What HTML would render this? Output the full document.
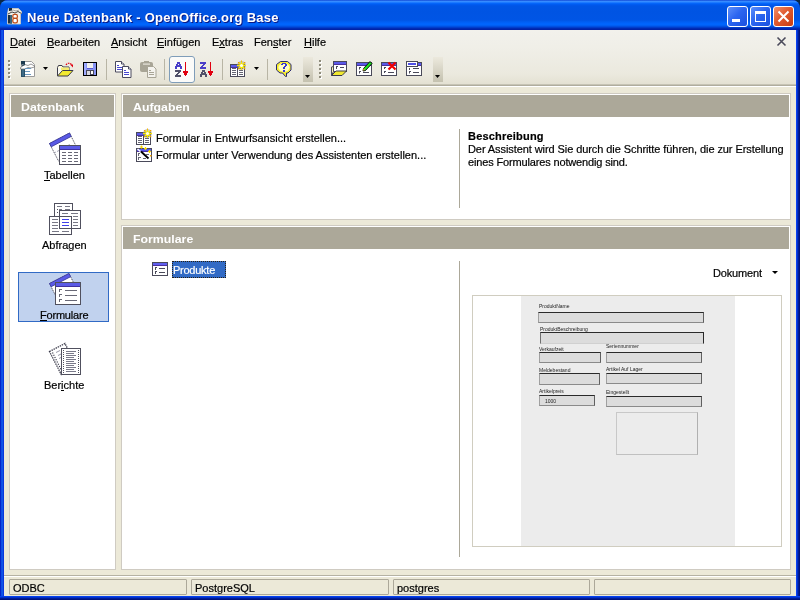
<!DOCTYPE html>
<html><head><meta charset="utf-8">
<style>
*{margin:0;padding:0;box-sizing:border-box}
html,body{width:800px;height:600px;overflow:hidden;background:#0a2848}
body{position:relative;font-family:"Liberation Sans",sans-serif;font-size:11px;color:#000;line-height:1;-webkit-font-smoothing:antialiased}
.t,.menu,.status span,.hdr span,#ttext,.lbl{will-change:transform}
.t,.menu,.status span{-webkit-text-stroke:0.2px currentColor}
.a{position:absolute}
svg{position:absolute;overflow:visible}
#win{position:absolute;left:0;top:0;width:800px;height:600px;border-radius:8px 8px 0 0;overflow:hidden;
 background:linear-gradient(90deg,#0019b8 0,#0831d9 1px,#166aee 2px,#0a3ee0 3px,#0831d9 4px,#0a40f0 796px,#0a40f0 797px,#0030c8 797px,#0030c8 798px,#001c98 798px,#001c98 799px,#00127a 799px)}
#title{position:absolute;left:0;top:0;width:800px;height:30px;
 background:linear-gradient(#0030c8 0px,#3d8fff 1px,#2f88ff 2px,#0a6cff 3px,#005ff4 4px,#0058ee 5px,#0055e6 6px,#0054e3 12px,#0055e5 20px,#005ff4 22px,#0066ff 24px,#0064fa 25px,#0058ec 26px,#0046d6 27px,#0034c0 28px,#0022a8 29px,#0022a8 30px)}
#ttext{position:absolute;left:27px;top:11px;color:#fff;font-weight:bold;font-size:13px;letter-spacing:0.25px;text-shadow:1px 1px #0a1883;white-space:nowrap}
#client{position:absolute;left:4px;top:30px;width:792px;height:566px;background:#ece9d8}
#bottomb{position:absolute;left:0;top:596px;width:800px;height:4px;background:linear-gradient(#0440f0 0,#0440f0 1px,#0030c8 1px,#0030c8 2px,#001c98 2px,#001c98 3px,#00127a 3px)}
#dock{position:absolute;left:4px;top:30px;width:792px;height:55px;background:linear-gradient(#f2f1ec 0,#f0efe8 30%,#ebe9de 80%,#e3e0d1 100%)}
.menu{position:absolute;top:37px;font-size:11px;white-space:nowrap}
.menu u{text-decoration:none;border-bottom:1px solid #000;display:inline-block;line-height:9px;padding-bottom:0px}
.panel{position:absolute;border:1px solid #cfcbc2;background:#fff}
.hdr{position:absolute;left:1px;top:1px;right:1px;height:22px;background:#aca899;color:#fff;font-weight:bold;font-size:11px;white-space:nowrap}
.hdr span{position:absolute;left:10px;top:7px;letter-spacing:0px;transform:scaleX(1.12);transform-origin:0 0}
.status{position:absolute;top:579px;height:16px;border:1px solid #aca899;border-radius:1px;font-size:11px;white-space:nowrap}
.status span{position:absolute;left:3px;top:3px}
.t{position:absolute;white-space:nowrap;font-size:11px}
.sep{position:absolute;top:59px;width:1px;height:21px;background:#b8b5a5}
.grip{position:absolute;width:3px;top:60px;height:19px;background:repeating-linear-gradient(#c1bfb0 0 1px,#fff 1px 2px,transparent 2px 4px)}
.chev{position:absolute;top:57px;width:10px;height:25px;background:linear-gradient(#ece9dd,#c4c1af)}
.fl{position:absolute;background:#dcdcdc;border:1px solid;border-color:#2a2a2a #606060 #8a8a8a #a0a0a0}
.lbl{position:absolute;font-size:5px;color:#222;white-space:nowrap;line-height:5px}
</style></head><body>
<div id="win">
 <div id="title"><div id="ttext">Neue Datenbank - OpenOffice.org Base</div></div>
 <div id="client"></div>
 <div id="bottomb"></div>
</div>
<div id="dock"></div>
<!-- title icon -->
<svg style="left:5px;top:6px" width="20" height="20" viewBox="0 0 20 20">
 <path d="M2.5 7.5l1-5h10l3 3v2l-1 1v9.5h-13z" fill="#f2f0ea" stroke="#d0ccc0" stroke-width="0.8"/>
 <rect x="4" y="2" width="3" height="3" fill="#1a2a38"/>
 <path d="M3 8l4-2 3 1 3-1.5 3.5 2" stroke="#404040" fill="none" stroke-width="1"/>
 <path d="M5 5l3-1 3 1 3-1" stroke="#909090" fill="none" stroke-width="0.8"/>
 <rect x="3" y="9" width="4" height="8.5" fill="#1c3040"/>
 <rect x="5" y="9" width="2" height="8.5" fill="#3a6478"/>
 <rect x="7.8" y="8.3" width="4.6" height="4" rx="1.6" fill="#fff" stroke="#c04c18" stroke-width="1.3"/>
 <rect x="7.8" y="12.3" width="4.6" height="4.5" rx="1.6" fill="#fff" stroke="#c04c18" stroke-width="1.3"/>
</svg>
<!-- window buttons -->
<div class="a" style="left:727px;top:6px;width:21px;height:21px;border:1px solid #fff;border-radius:3px;background:linear-gradient(135deg,#5d8ffa 0%,#2c66f0 45%,#1a50e0 100%)"></div>
<div class="a" style="left:732px;top:19px;width:8px;height:3px;background:#fff"></div>
<div class="a" style="left:750px;top:6px;width:21px;height:21px;border:1px solid #fff;border-radius:3px;background:linear-gradient(135deg,#5d8ffa 0%,#2c66f0 45%,#1a50e0 100%)"></div>
<div class="a" style="left:755px;top:11px;width:11px;height:11px;border:1px solid #fff;border-top-width:3px"></div>
<div class="a" style="left:773px;top:6px;width:21px;height:21px;border:1px solid #fff;border-radius:3px;background:linear-gradient(135deg,#f0906a 0%,#e05a30 45%,#c83c10 100%)"></div>
<svg style="left:773px;top:6px" width="21" height="21"><path d="M5.5 5.5l10 10M15.5 5.5l-10 10" stroke="#fff" stroke-width="2"/></svg>

<!-- menu -->
<div class="menu" style="left:10px"><u>D</u>atei</div>
<div class="menu" style="left:47px"><u>B</u>earbeiten</div>
<div class="menu" style="left:111px"><u>A</u>nsicht</div>
<div class="menu" style="left:157px"><u>E</u>infügen</div>
<div class="menu" style="left:212px">E<u>x</u>tras</div>
<div class="menu" style="left:254px">Fen<u>s</u>ter</div>
<div class="menu" style="left:304px"><u>H</u>ilfe</div>
<svg style="left:776px;top:36px" width="11" height="11"><path d="M1.5 1.5l8 8M9.5 1.5l-8 8" stroke="#4a4a5a" stroke-width="1.6"/></svg>

<!-- toolbar separator line -->
<div class="a" style="left:4px;top:84px;width:792px;height:1px;background:#c6c3b4"></div>
<div class="a" style="left:4px;top:85px;width:792px;height:1px;background:#b0ad9e"></div>
<div class="a" style="left:4px;top:86px;width:792px;height:1px;background:#fff"></div>

<!-- toolbar -->
<svg style="left:8px;top:59px" width="4" height="20" viewBox="0 0 4 20"><rect x="0" y="1" width="2" height="2" fill="#8e8c7c"/><rect x="2" y="2" width="1" height="2" fill="#fff"/><rect x="1" y="3" width="2" height="1" fill="#fff"/><rect x="0" y="5" width="2" height="2" fill="#8e8c7c"/><rect x="2" y="6" width="1" height="2" fill="#fff"/><rect x="1" y="7" width="2" height="1" fill="#fff"/><rect x="0" y="9" width="2" height="2" fill="#8e8c7c"/><rect x="2" y="10" width="1" height="2" fill="#fff"/><rect x="1" y="11" width="2" height="1" fill="#fff"/><rect x="0" y="13" width="2" height="2" fill="#8e8c7c"/><rect x="2" y="14" width="1" height="2" fill="#fff"/><rect x="1" y="15" width="2" height="1" fill="#fff"/><rect x="0" y="17" width="2" height="2" fill="#8e8c7c"/><rect x="2" y="18" width="1" height="2" fill="#fff"/><rect x="1" y="19" width="2" height="1" fill="#fff"/></svg>
<svg style="left:17px;top:58px" width="20" height="20" viewBox="0 0 20 20">
 <path d="M4.5 3.5h10l3 3v12h-13z" fill="#fff" stroke="#9a9a9a"/>
 <rect x="4" y="3" width="4" height="3.5" fill="#1e3c50"/>
 <rect x="4" y="10" width="4" height="9" fill="#2a5068"/>
 <rect x="5" y="11" width="2" height="7" fill="#3c6a86"/>
 <path d="M3.5 9.5L8 6.5l3 1 3-1.5 3.5 2v1l-3.5 1-3-0.5-3 1.5-4.5 0z" fill="#fff" stroke="#6a6a6a" stroke-width="0.7"/>
 <path d="M5 7.5l3-1" stroke="#1e3c50" stroke-width="1.2"/>
 <path d="M8 10.5h6M8 13.5h5M8 16.5h6" stroke="#6a98c0" stroke-width="1.2"/>
</svg>
<svg style="left:43px;top:67px" width="6" height="4" viewBox="0 0 6 4"><path d="M0 0h5l-2.5 3z" fill="#000"/></svg>
<svg style="left:55px;top:58px" width="20" height="20" viewBox="0 0 20 20">
 <path d="M11 7c1-2 3.5-2.5 5.5-0.5" fill="none" stroke="#e00010" stroke-width="1.2" stroke-dasharray="1.6 0.8"/>
 <path d="M15 6.5h3v3z" fill="#e00010"/>
 <path d="M2.5 18V9.5l1-2h3.5l1 1.5h6v4" fill="#fffce0" stroke="#3a3a4a"/>
 <path d="M3 10h3v7h-3z" fill="#f8f8f0"/>
 <path d="M6 9.5h8v3h-8z" fill="#f4ec70"/>
 <path d="M2.5 18l5-5.5h10.5l-5 5.5z" fill="#f2ea30" stroke="#3a3a4a"/>
</svg>
<svg style="left:80px;top:58px" width="20" height="20" viewBox="0 0 20 20">
 <rect x="3.5" y="4.5" width="13" height="13" fill="#8894f4" stroke="#000"/>
 <rect x="4" y="5" width="2" height="12" fill="#a0acff"/>
 <rect x="7" y="5" width="6" height="5" fill="#f0f0f0"/>
 <rect x="7" y="10" width="6" height="1" fill="#5a5ad0"/>
 <rect x="6" y="12" width="8" height="5" fill="#4a4a5a"/>
 <rect x="7" y="13" width="3" height="4" fill="#d8d8e0"/>
 <rect x="11" y="13" width="2" height="3" fill="#fff"/>
</svg>
<div class="sep" style="left:106px"></div>
<svg style="left:115px;top:61px" width="17" height="17" viewBox="0 0 17 17">
 <path d="M0.5 0.5h6l2.5 2.5v8h-8.5z" fill="#fff" stroke="#4a4a5e" stroke-width="1"/>
 <path d="M6.5 0.5v2.5h2.5" fill="#fff" stroke="#4a4a5e"/>
 <rect x="2" y="4" width="2" height="1" fill="#4848d0"/><rect x="2" y="6" width="5" height="1" fill="#4848d0"/><rect x="2" y="8" width="5" height="1" fill="#4848d0"/>
 <path d="M7.5 5.5h6l2.5 2.5v8.5h-8.5z" fill="#fff" stroke="#4a4a5e" stroke-width="1"/>
 <path d="M13.5 5.5v2.5h2.5" fill="#fff" stroke="#4a4a5e"/>
 <rect x="9" y="9" width="2" height="1" fill="#4848d0"/><rect x="9" y="11" width="5" height="1" fill="#4848d0"/><rect x="9" y="13" width="5" height="1" fill="#4848d0"/>
</svg>
<svg style="left:140px;top:61px" width="17" height="17" viewBox="0 0 17 17">
 <rect x="0" y="1" width="13" height="10" rx="2" fill="#a8a596"/>
 <rect x="4" y="0" width="5" height="2" fill="#a8a596"/>
 <rect x="3" y="2.5" width="7" height="1.2" fill="#e8e6dc"/>
 <path d="M7.5 5.5h6l2.5 2.5v8.5h-8.5z" fill="#f4f3ee" stroke="#a8a596" stroke-width="1"/>
 <rect x="9" y="9" width="2" height="1" fill="#a8a596"/><rect x="9" y="11" width="5" height="1" fill="#a8a596"/><rect x="9" y="13" width="5" height="1" fill="#a8a596"/>
</svg>
<div class="sep" style="left:164px"></div>
<div class="a" style="left:169px;top:56px;width:26px;height:27px;border:1px solid #7f9db9;border-radius:3px;background:#fbfbf9"></div>
<svg style="left:175px;top:62px" width="14" height="16" viewBox="0 0 14 16" shape-rendering="crispEdges">
 <path d="M2 0h3v2h1v2h1v3h-2v-2h-3v2h-2v-3h1v-2h1zM3 2v1h1v-1z" fill="#4a3ec8" fill-rule="evenodd"/>
 <path d="M0 8h6v2h-1v1h-1v1h-1v1h3v2h-6v-2h1v-1h1v-1h1v-1h-3z" fill="#52526a"/>
 <rect x="10" y="0" width="1" height="14" fill="#e00010"/>
 <path d="M8 9h5v2h-1v2h-1v1h-1v-1h-1v-2h-1z" fill="#e00010"/>
</svg>
<svg style="left:200px;top:62px" width="14" height="16" viewBox="0 0 14 16" shape-rendering="crispEdges">
 <path d="M0 0h6v2h-1v1h-1v1h-1v1h3v2h-6v-2h1v-1h1v-1h1v-1h-3z" fill="#4a3ec8"/>
 <path d="M2 8h3v2h1v2h1v3h-2v-2h-3v2h-2v-3h1v-2h1zM3 10v1h1v-1z" fill="#52526a" fill-rule="evenodd"/>
 <rect x="10" y="0" width="1" height="14" fill="#e00010"/>
 <path d="M8 9h5v2h-1v2h-1v1h-1v-1h-1v-2h-1z" fill="#e00010"/>
</svg>
<div class="sep" style="left:222px"></div>
<svg style="left:228px;top:58px" width="20" height="20" viewBox="0 0 20 20">
 <rect x="2.5" y="6.5" width="14" height="12" fill="#fff" stroke="#4a4a5a"/>
 <rect x="2" y="18" width="15" height="1" fill="#4a4a5a"/>
 <rect x="3" y="7" width="13" height="2" fill="#5a5ae8"/><rect x="3" y="9" width="13" height="1" fill="#4a30a0"/>
 <rect x="9" y="7" width="1" height="11" fill="#4a4a5a"/>
 <path d="M4 10.5h4M4 12.5h4M4 14.5h4M4 16.5h4M11 10.5h4M11 12.5h4M11 14.5h4M11 16.5h4" stroke="#646472"/>
 <circle cx="13.5" cy="7.5" r="4.5" fill="#8080c8" opacity="0.45"/>
 <path d="M13.5 3v9M9 7.5h9M10.5 4.5l6 6M16.5 4.5l-6 6" stroke="#f8e800" stroke-width="1.3"/>
 <circle cx="13.5" cy="7.5" r="1.6" fill="#fffff0"/>
 <rect x="10" y="4" width="1.3" height="1.3" fill="#f0a000"/><rect x="16" y="4" width="1.3" height="1.3" fill="#f0a000"/><rect x="10" y="10" width="1.3" height="1.3" fill="#f0a000"/><rect x="16" y="10" width="1.3" height="1.3" fill="#f0a000"/>
 <rect x="13" y="2.5" width="1" height="1" fill="#f0a000"/>
</svg>
<svg style="left:254px;top:67px" width="6" height="4" viewBox="0 0 6 4"><path d="M0 0h5l-2.5 3z" fill="#000"/></svg>
<div class="sep" style="left:267px"></div>
<svg style="left:274px;top:59px" width="20" height="20" viewBox="0 0 20 20">
 <path d="M6.5 2.5h7l3.5 3v5.5l-3 3h-1.5v3.5h-1l-3-3.5h-2.5l-3.5-3v-5.5z" fill="#f6ee30" stroke="#2a2a70"/>
 <ellipse cx="10" cy="8.5" rx="5.5" ry="4.2" fill="#fffcc0"/>
 <path d="M7 5h1v-1h4v1h1v2h-1v1h-1v2h-2v-2h1v-1h1v-2h-2v1h-2z" fill="#3838d0" shape-rendering="crispEdges"/>
 <rect x="9" y="11" width="2" height="2" fill="#3838d0" shape-rendering="crispEdges"/>
</svg>
<div class="chev" style="left:303px"></div><svg style="left:305px;top:75px" width="6" height="4" viewBox="0 0 6 4"><path d="M0 0h5l-2.5 3z" fill="#000"/></svg>
<svg style="left:319px;top:59px" width="4" height="20" viewBox="0 0 4 20"><rect x="0" y="1" width="2" height="2" fill="#8e8c7c"/><rect x="2" y="2" width="1" height="2" fill="#fff"/><rect x="1" y="3" width="2" height="1" fill="#fff"/><rect x="0" y="5" width="2" height="2" fill="#8e8c7c"/><rect x="2" y="6" width="1" height="2" fill="#fff"/><rect x="1" y="7" width="2" height="1" fill="#fff"/><rect x="0" y="9" width="2" height="2" fill="#8e8c7c"/><rect x="2" y="10" width="1" height="2" fill="#fff"/><rect x="1" y="11" width="2" height="1" fill="#fff"/><rect x="0" y="13" width="2" height="2" fill="#8e8c7c"/><rect x="2" y="14" width="1" height="2" fill="#fff"/><rect x="1" y="15" width="2" height="1" fill="#fff"/><rect x="0" y="17" width="2" height="2" fill="#8e8c7c"/><rect x="2" y="18" width="1" height="2" fill="#fff"/><rect x="1" y="19" width="2" height="1" fill="#fff"/></svg>
<svg style="left:329px;top:58px" width="20" height="20" viewBox="0 0 20 20">
 <rect x="4.5" y="3.5" width="13" height="10" fill="#fff" stroke="#4a4a5a"/>
 <rect x="5" y="4" width="12" height="2" fill="#5a5ae8"/><rect x="5" y="6" width="12" height="1" fill="#4a30a0"/>
 <path d="M7.5 9v2M7 8.5h2M11 9.5h4" stroke="#4a4a5a"/>
 <path d="M2.5 17.5v-8.5l2-0.5v5z" fill="#f8f4b0" stroke="#4a4a5a"/>
 <path d="M2.5 17.5l4.5-4.5h10.5l-4.5 4.5z" fill="#f0e830" stroke="#3a3a4a"/>
</svg>
<svg style="left:354px;top:58px" width="20" height="20" viewBox="0 0 20 20">
 <rect x="2.5" y="4.5" width="15" height="13" fill="#fff" stroke="#4a4a5a"/>
 <rect x="3" y="5" width="14" height="2" fill="#5a5ae8"/><rect x="3" y="7" width="14" height="1" fill="#4a30a0"/>
 <path d="M5.5 9.5v2M5 9.5h2M5.5 13.5v2M5 13.5h2M9 14.5h6" stroke="#4a4a5a"/>
 <path d="M9.5 10.5l6.5-7 2 2-6.5 7-2.5 0.5z" fill="#20e020" stroke="#000" stroke-width="0.9"/>
 <path d="M9 12.5l0.6-2 1.5 1.4z" fill="#f0a030"/>
</svg>
<svg style="left:379px;top:58px" width="20" height="20" viewBox="0 0 20 20">
 <rect x="2.5" y="4.5" width="15" height="13" fill="#fff" stroke="#4a4a5a"/>
 <rect x="3" y="5" width="14" height="2" fill="#5a5ae8"/><rect x="3" y="7" width="14" height="1" fill="#4a30a0"/>
 <path d="M5.5 9v2M5 9.5h2M5.5 13v2M5 13.5h2M9 14.5h6" stroke="#4a4a5a"/>
 <path d="M9.5 4.5l7 7M16.5 4.5l-7 7" stroke="#f00000" stroke-width="2.2"/>
</svg>
<svg style="left:404px;top:58px" width="20" height="20" viewBox="0 0 20 20">
 <rect x="2.5" y="4.5" width="15" height="13" fill="#fff" stroke="#4a4a5a"/>
 <rect x="14" y="5" width="3" height="2" fill="#5a5ae8"/><rect x="14" y="7" width="3" height="1" fill="#4a30a0"/>
 <rect x="2.5" y="3.5" width="11" height="5" fill="#fff" stroke="#4a4a5a"/>
 <rect x="4" y="5" width="8" height="2" fill="#5050e8"/>
 <path d="M5.5 10v2M5.5 13.5v2M5 13.5h2M9 10.5h6M9 14.5h6" stroke="#4a4a5a"/>
</svg>
<div class="chev" style="left:433px"></div><svg style="left:435px;top:75px" width="6" height="4" viewBox="0 0 6 4"><path d="M0 0h5l-2.5 3z" fill="#000"/></svg>

<!-- panels -->
<div class="panel" style="left:9px;top:93px;width:107px;height:477px"><div class="hdr"><span>Datenbank</span></div></div>
<div class="panel" style="left:121px;top:93px;width:670px;height:127px"><div class="hdr"><span>Aufgaben</span></div></div>
<div class="panel" style="left:121px;top:225px;width:670px;height:345px"><div class="hdr"><span>Formulare</span></div></div>

<!-- left panel items -->
<svg style="left:48px;top:131px" width="36" height="36" viewBox="0 0 36 36">
 <path d="M1.5 12.5L21.5 2l9 18-20 10z" fill="#fff" stroke="#50505e" stroke-width="1" stroke-dasharray="1.2 0.8"/>
 <path d="M1.5 12.5L21.5 2l1.7 3.4-20 10.4z" fill="#5a5ae6" stroke="#3c3ca0" stroke-width="0.9"/>
 <path d="M13 18l5-2.5M20 14.5l3-1.5M6 22l5-2.5" stroke="#9a9aaa" stroke-dasharray="2 1.5"/>
 <rect x="11.5" y="14.5" width="21" height="19" fill="#fff" stroke="#50505e"/>
 <rect x="12" y="15" width="20" height="3" fill="#5a5ae6"/>
 <rect x="12" y="18" width="20" height="1" fill="#4030a0"/>
 <path d="M14 21.5h4M20 21.5h4M26 21.5h4M14 24.5h4M20 24.5h4M26 24.5h4M14 27.5h4M20 27.5h4M26 27.5h4M14 30.5h4M20 30.5h4M26 30.5h4" stroke="#686876"/>
</svg>
<div class="t" style="left:44px;top:170px">Tabellen</div>
<div class="a" style="left:44px;top:180px;width:6px;height:1px;background:#000"></div>

<svg style="left:46px;top:201px" width="38" height="38" viewBox="0 0 38 38">
 <rect x="8.5" y="2.5" width="18" height="14" fill="#fff" stroke="#50505e"/>
 <path d="M11 5.5h5M19 5.5h5M19 8.5h5M13 8.5h3" stroke="#787886"/>
 <path d="M11 8.5h1M11 11.5h1" stroke="#50505e"/>
 <rect x="13.5" y="9.5" width="21" height="18" fill="#fff" stroke="#50505e"/>
 <path d="M16 12.5h6M25 12.5h7M27 15.5h5M27 18.5h5M27 21.5h5M27 24.5h5" stroke="#787886"/>
 <rect x="3.5" y="15.5" width="22" height="18" fill="#fff" stroke="#50505e"/>
 <path d="M6 18.5h6M6 21.5h6M6 24.5h6M6 27.5h6M6 30.5h7M16 30.5h7" stroke="#787886"/>
 <rect x="13.5" y="9.5" width="21" height="18" fill="none" stroke="#50505e"/>
 <path d="M16 18.5h7M16 21.5h7M16 24.5h7" stroke="#4040e8"/>
</svg>
<div class="t" style="left:42px;top:240px">Abfragen</div>

<div class="a" style="left:18px;top:272px;width:91px;height:50px;background:#c1d2ee;border:1px solid #316ac5"></div>
<svg style="left:46px;top:271px" width="38" height="38" viewBox="0 0 38 38">
 <path d="M3.5 12.5L23 2.5l4.5 9-18.5 12z" fill="#fff" stroke="#50505e" stroke-width="1" stroke-dasharray="1.2 0.8"/>
 <path d="M3.5 12.5L23 2.5l1.6 3.2-19.5 10z" fill="#5a5ae6" stroke="#3c3ca0" stroke-width="0.9"/>
 <rect x="9.5" y="11.5" width="25" height="22" fill="#fff" stroke="#50505e"/>
 <rect x="10" y="12" width="24" height="3" fill="#5a5ae6"/>
 <rect x="10" y="15" width="24" height="1" fill="#4030a0"/>
 <path d="M13.5 18v3M13 18.5h3M13.5 23v3M13 23.5h3M13.5 28v3M13 28.5h3" stroke="#686876"/>
 <path d="M19 19.5h12M19 24.5h12M19 29.5h12" stroke="#686876"/>
</svg>
<div class="t" style="left:40px;top:310px;letter-spacing:-0.2px">Formulare</div>
<div class="a" style="left:40px;top:320px;width:7px;height:1px;background:#000"></div>

<svg style="left:46px;top:341px" width="38" height="38" viewBox="0 0 38 38">
 <path d="M3.5 10.5L19 2.5l2.5 5-6.5 25.5z" fill="#fff" stroke="#3a3a4a" stroke-width="1.3" stroke-dasharray="1.4 0.9"/>
 <path d="M6.5 11.5l8.5 17" stroke="#3a3a4a" stroke-width="1.2" stroke-dasharray="1.2 1.3"/>
 <path d="M10 11.5l4-2M12 14.5l3-1.5M13 17.5l2-1" stroke="#9a9aaa"/>
 <rect x="15.5" y="7.5" width="19" height="26" fill="#fff" stroke="#50505e"/>
 <path d="M17.5 9v24M32.5 9v24" stroke="#50505e" stroke-dasharray="1 1"/>
 <path d="M20 10.5h10M20 12.5h8M20 14.5h10M20 16.5h8M20 18.5h10M20 20.5h8M20 22.5h10M20 24.5h8M20 26.5h10M20 28.5h8M20 30.5h10" stroke="#7a7a8a"/>
</svg>
<div class="t" style="left:44px;top:380px">Berichte</div>
<div class="a" style="left:61px;top:390px;width:3px;height:1px;background:#000"></div>

<!-- Aufgaben content -->
<svg style="left:134px;top:126px" width="20" height="20" viewBox="0 0 20 20">
 <rect x="2.5" y="6.5" width="14" height="12" fill="#fff" stroke="#4a4a5a"/>
 <rect x="2" y="18" width="15" height="1" fill="#4a4a5a"/>
 <rect x="3" y="7" width="13" height="2" fill="#5a5ae8"/><rect x="3" y="9" width="13" height="1" fill="#4a30a0"/>
 <rect x="9" y="7" width="1" height="11" fill="#4a4a5a"/>
 <path d="M4 10.5h4M4 12.5h4M4 14.5h4M4 16.5h4M11 10.5h4M11 12.5h4M11 14.5h4M11 16.5h4" stroke="#646472"/>
 <circle cx="13.5" cy="7.5" r="4.5" fill="#8080c8" opacity="0.45"/>
 <path d="M13.5 3v9M9 7.5h9M10.5 4.5l6 6M16.5 4.5l-6 6" stroke="#f8e800" stroke-width="1.3"/>
 <circle cx="13.5" cy="7.5" r="1.6" fill="#fffff0"/>
 <rect x="10" y="4" width="1.3" height="1.3" fill="#f0a000"/><rect x="16" y="4" width="1.3" height="1.3" fill="#f0a000"/><rect x="10" y="10" width="1.3" height="1.3" fill="#f0a000"/><rect x="16" y="10" width="1.3" height="1.3" fill="#f0a000"/>
 <rect x="13" y="2.5" width="1" height="1" fill="#f0a000"/>
</svg>
<svg style="left:134px;top:144px" width="20" height="20" viewBox="0 0 20 20">
 <rect x="2.5" y="4.5" width="15" height="13" fill="#fff" stroke="#4a4a5a"/>
 <rect x="3" y="5" width="14" height="2" fill="#5a5ae8"/><rect x="3" y="7" width="14" height="1" fill="#4a30a0"/>
 <path d="M4.5 9v3M4 9.5h2M4.5 13v3M4 13.5h3M12 10.5h3M9 14.5h3" stroke="#646472"/>
 <path d="M3.5 5l3 2.5" stroke="#fff" stroke-width="1.6"/>
 <path d="M7 7.5l7.5 7" stroke="#000" stroke-width="1.8"/>
 <path d="M7.5 1.5v3M6 3h3M11.5 3v3M10 4.5h3M15.5 6v3M14 7.5h3" stroke="#f8d800" stroke-width="1.2"/>
 <rect x="16" y="11" width="1.5" height="1.5" fill="#f0a000"/>
</svg>
<div class="t" style="left:156px;top:133px">Formular in Entwurfsansicht erstellen...</div>
<div class="t" style="left:156px;top:150px">Formular unter Verwendung des Assistenten erstellen...</div>
<div class="a" style="left:459px;top:129px;width:1px;height:79px;background:#aca899"></div>
<div class="t" style="left:468px;top:131px;font-weight:bold;letter-spacing:0.2px">Beschreibung</div>
<div class="t" style="left:468px;top:144px;letter-spacing:-0.08px">Der Assistent wird Sie durch die Schritte führen, die zur Erstellung</div>
<div class="t" style="left:468px;top:157px;letter-spacing:-0.15px">eines Formulares notwendig sind.</div>

<!-- Formulare content -->
<svg style="left:150px;top:259px" width="20" height="20" viewBox="0 0 20 20">
 <rect x="2.5" y="3.5" width="15" height="13" fill="#fff" stroke="#4a4a5a"/>
 <rect x="3" y="4" width="14" height="2" fill="#6060f0"/><rect x="3" y="6" width="14" height="1" fill="#4a30a0"/>
 <path d="M5.5 8v3M5 8.5h2M5.5 12v3M5 12.5h2M9 9.5h6M9 13.5h6" stroke="#4a4a5a"/>
</svg>
<div class="a" style="left:172px;top:261px;width:54px;height:17px;background:#316ac5;border:1px dotted #2a2010"></div>
<div class="t" style="left:173px;top:265px;color:#fff;letter-spacing:-0.25px">Produkte</div>
<div class="a" style="left:459px;top:261px;width:1px;height:296px;background:#aca899"></div>
<div class="t" style="left:713px;top:268px;letter-spacing:-0.15px">Dokument</div>
<svg style="left:772px;top:271px" width="6" height="4"><path d="M0 0h6l-3 3z" fill="#000"/></svg>

<!-- preview -->
<div class="a" style="left:472px;top:295px;width:310px;height:252px;border:1px solid #d0cdc0;background:#fff"></div>
<div class="a" style="left:521px;top:296px;width:214px;height:250px;background:#ececec"></div>
<div class="lbl" style="left:539px;top:304px">ProduktName</div>
<div class="fl" style="left:538px;top:312px;width:166px;height:11px"></div>
<div class="lbl" style="left:540px;top:327px">ProduktBeschreibung</div>
<div class="fl" style="left:540px;top:332px;width:164px;height:12px;border-color:#2a2a2a #2a2a2a #d0d0d0 #707070"></div>
<div class="lbl" style="left:539px;top:347px">Verkaufzeit</div>
<div class="lbl" style="left:606px;top:344px">Seriennummer</div>
<div class="fl" style="left:539px;top:352px;width:62px;height:11px"></div>
<div class="fl" style="left:606px;top:352px;width:96px;height:11px"></div>
<div class="lbl" style="left:539px;top:368px">Meldebestand</div>
<div class="lbl" style="left:606px;top:367px">Artikel Auf Lager</div>
<div class="fl" style="left:539px;top:373px;width:61px;height:12px"></div>
<div class="fl" style="left:606px;top:373px;width:96px;height:11px"></div>
<div class="lbl" style="left:539px;top:389px">Artikelpreis</div>
<div class="lbl" style="left:606px;top:390px">Eingestellt</div>
<div class="fl" style="left:539px;top:395px;width:56px;height:11px"><span class="lbl" style="left:5px;top:3px">1000</span></div>
<div class="fl" style="left:606px;top:396px;width:96px;height:11px"></div>
<div class="a" style="left:616px;top:412px;width:82px;height:43px;border:1px solid #c8c8c8;border-right-color:#b0b0b0;border-bottom-color:#c0c0c0"></div>

<!-- status -->
<div class="a" style="left:4px;top:575px;width:792px;height:1px;background:#b5b2a3"></div>
<div class="a" style="left:4px;top:576px;width:792px;height:1px;background:#fff"></div>
<div class="status" style="left:9px;width:178px"><span>ODBC</span></div>
<div class="status" style="left:191px;width:198px"><span>PostgreSQL</span></div>
<div class="status" style="left:393px;width:197px"><span>postgres</span></div>
<div class="status" style="left:594px;width:197px"></div>
</body></html>
